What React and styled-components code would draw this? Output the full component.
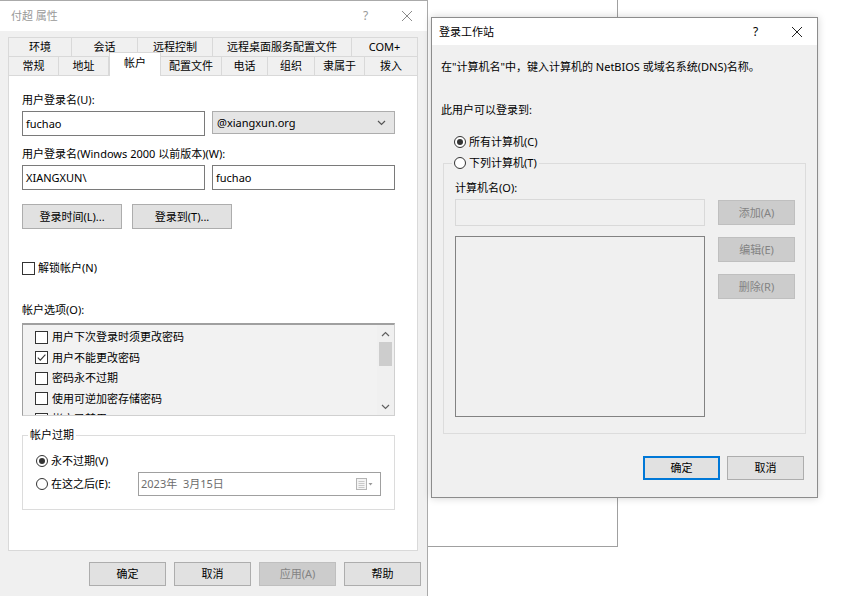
import React from 'react';
import styled, { createGlobalStyle } from 'styled-components';

const GlobalStyle = createGlobalStyle`
  html, body {
    margin: 0;
    padding: 0;
    background: #fff;
  }
  body {
    font-family: "Noto Sans", "Noto Sans CJK SC", sans-serif;
    font-size: 11px;
    color: #000;
  }
  * {
    box-sizing: border-box;
  }
`;

const Desktop = styled.div`
  position: relative;
  width: 848px;
  height: 596px;
  overflow: hidden;
  background: #fff;
`;

const BackWindow = styled.div`
  position: absolute;
  left: 427px;
  top: -1px;
  width: 191px;
  height: 548px;
  background: #fff;
  border: 1px solid #a0a0a0;
`;

const Window = styled.div`
  position: absolute;
  left: ${p => p.$x}px;
  top: ${p => p.$y}px;
  width: ${p => p.$w}px;
  height: ${p => p.$h}px;
  display: flex;
  flex-direction: column;
  background: #f0f0f0;
  border: 1px solid ${p => (p.$active ? '#8c8c8c' : '#aaaaaa')};
  box-shadow: ${p => (p.$active ? '0 0 8px rgba(0,0,0,0.18)' : 'none')};
`;

const TitleBar = styled.div`
  flex: none;
  height: ${p => p.$h}px;
  display: flex;
  align-items: center;
  padding-left: ${p => p.$pl}px;
  background: #fff;
  color: ${p => (p.$active ? '#000' : '#999')};
  line-height: 16px;
`;

const TitleText = styled.div`
  flex: 1;
`;

const TitleButton = styled.div`
  width: 41px;
  height: 100%;
  display: flex;
  align-items: center;
  justify-content: center;
  font-size: 12px;
  color: ${p => p.$color || 'inherit'};
`;

const CloseIcon = ({ color }) => (
  <svg width="12" height="12" viewBox="0 0 12 12">
    <path d="M1 1 L11 11 M11 1 L1 11" stroke={color} strokeWidth="1" fill="none" />
  </svg>
);

/* ---------- tabs ---------- */

const TabArea = styled.div`
  padding: 6px 0 0 8px;
  width: 418px;
`;

const TabRow = styled.div`
  display: flex;
  align-items: flex-end;
  height: 19px;
`;

const Tab = styled.div`
  flex: none;
  width: ${p => p.$w}px;
  height: ${p => (p.$active ? 24 : 19)}px;
  margin-bottom: ${p => (p.$active ? -1 : 0)}px;
  padding-bottom: ${p => (p.$active ? 4 : 0)}px;
  position: relative;
  z-index: ${p => (p.$active ? 2 : 0)};
  display: flex;
  align-items: center;
  justify-content: center;
  background: ${p => (p.$active ? '#fff' : '#f0f0f0')};
  border: 1px solid #d9d9d9;
  border-bottom: none;
  border-left: ${p => (p.$first || p.$active ? '1px solid #d9d9d9' : 'none')};
  line-height: 16px;
  white-space: nowrap;
`;

const Panel = styled.div`
  width: 410px;
  height: 476px;
  background: #fff;
  border: 1px solid #d9d9d9;
  padding: 16px 22px 0 13px;
  display: flex;
  flex-direction: column;
`;

/* ---------- controls ---------- */

const Label = styled.div`
  margin-top: ${p => p.$mt || 0}px;
  line-height: 16px;
  height: 16px;
  white-space: nowrap;
`;

const FieldRow = styled.div`
  margin-top: ${p => p.$mt || 0}px;
  display: grid;
  grid-template-columns: 183px 183px;
  column-gap: 7px;
  align-items: start;
`;

const TextBox = styled.div`
  height: ${p => p.$h || 25}px;
  background: ${p => (p.$disabled ? '#f0f0f0' : '#fff')};
  border: 1px solid ${p => (p.$disabled ? '#d9d9d9' : '#7a7a7a')};
  padding: 0 3px;
  display: flex;
  align-items: center;
  line-height: 16px;
  white-space: nowrap;
`;

const Select = styled.div`
  height: 23px;
  background: #e5e5e5;
  border: 1px solid #adadad;
  padding: 0 8px 0 4px;
  display: flex;
  align-items: center;
  justify-content: space-between;
  line-height: 16px;
`;

const ButtonRow = styled.div`
  margin-top: ${p => p.$mt || 0}px;
  display: flex;
  gap: ${p => p.$gap}px;
  justify-content: ${p => p.$justify || 'flex-start'};
  padding-right: ${p => p.$pr || 0}px;
`;

const Button = styled.div`
  flex: none;
  width: ${p => p.$w || 77}px;
  height: ${p => p.$h || 24}px;
  display: flex;
  align-items: center;
  justify-content: center;
  background: ${p => (p.$disabled ? '#cccccc' : '#e1e1e1')};
  color: ${p => (p.$disabled ? '#838383' : '#000')};
  border: 1px solid ${p => (p.$default ? '#0078d7' : p.$disabled ? '#bfbfbf' : '#adadad')};
  box-shadow: ${p => (p.$default ? 'inset 0 0 0 1px #0078d7' : 'none')};
  line-height: 16px;
  white-space: nowrap;
`;

const CheckRow = styled.div`
  margin-top: ${p => p.$mt || 0}px;
  padding-left: ${p => p.$pl || 0}px;
  height: 16px;
  display: flex;
  align-items: center;
  gap: 3px;
  line-height: 16px;
  white-space: nowrap;
  flex: none;
`;

const CheckBox = styled.div`
  width: 13px;
  height: 13px;
  flex: none;
  background: #fff;
  border: 1px solid #333;
  display: flex;
  align-items: center;
  justify-content: center;
`;

const Check = ({ checked }) => (
  <CheckBox>
    {checked && (
      <svg width="11" height="11" viewBox="0 0 11 11">
        <path d="M1.8 5.6 L4.3 8.1 L9.4 2.6" fill="none" stroke="#333" strokeWidth="1.1" />
      </svg>
    )}
  </CheckBox>
);

const RadioCircle = styled.div`
  width: 12px;
  height: 12px;
  flex: none;
  border-radius: 50%;
  background: #fff;
  border: 1px solid #333;
  display: flex;
  align-items: center;
  justify-content: center;
  &::after {
    content: '';
    display: ${p => (p.$checked ? 'block' : 'none')};
    width: 6px;
    height: 6px;
    border-radius: 50%;
    background: #333;
  }
`;

/* ---------- account options list ---------- */

const ListBox = styled.div`
  margin-top: ${p => p.$mt || 0}px;
  height: ${p => p.$h}px;
  width: ${p => p.$w}px;
  flex: none;
  background: #f2f2f2;
  border: 1px solid #d0d0d0;
  border-top: 2px solid #a0a0a0;
  border-left-color: #a0a0a0;
  display: grid;
  grid-template-columns: 1fr 17px;
  overflow: hidden;
`;

const PlainList = styled.div`
  height: ${p => p.$h}px;
  background: #f0f0f0;
  border: 1px solid #828282;
`;

const ListItems = styled.div`
  padding: 2px 0 0 12px;
  overflow: hidden;
`;

const ListItem = styled.div`
  height: 20.5px;
  display: flex;
  align-items: center;
  gap: 4px;
  line-height: 16px;
  white-space: nowrap;
`;

const ScrollBar = styled.div`
  display: flex;
  flex-direction: column;
  background: #f0f0f0;
`;

const ScrollArrow = styled.div`
  height: 17px;
  flex: none;
  display: flex;
  align-items: center;
  justify-content: center;
`;

const ScrollThumb = styled.div`
  height: 24px;
  margin: 0 2px;
  background: #cdcdcd;
  flex: none;
`;

const ScrollTrack = styled.div`
  flex: 1;
`;

const Chevron = ({ up, color = '#606060' }) => (
  <svg width="9" height="6" viewBox="0 0 9 6">
    <path
      d={up ? 'M1 5 L4.5 1.5 L8 5' : 'M1 1 L4.5 4.5 L8 1'}
      fill="none"
      stroke={color}
      strokeWidth="1.2"
    />
  </svg>
);

/* ---------- group boxes ---------- */

const Group = styled.fieldset`
  margin: ${p => p.$mt || 0}px 0 0 ${p => p.$ml || 0}px;
  width: ${p => p.$w}px;
  min-width: 0;
  border: 1px solid #dcdcdc;
  padding: ${p => p.$pt}px ${p => p.$pr}px ${p => p.$pb}px ${p => p.$pl}px;
  flex: none;
`;

const Legend = styled.legend`
  margin-left: ${p => p.$ml || 0}px;
  padding: 0 2px;
  line-height: 16px;
  height: 16px;
  display: flex;
  align-items: center;
  gap: 3px;
  white-space: nowrap;
`;

const ExpiryRow = styled.div`
  margin-top: ${p => p.$mt || 0}px;
  display: grid;
  grid-template-columns: 102px 1fr;
  align-items: center;
`;

const DatePicker = styled.div`
  height: 24px;
  background: #fff;
  border: 1px solid #a0a0a0;
  padding: 0 6px 0 2px;
  display: flex;
  align-items: center;
  justify-content: space-between;
  color: #6d6d6d;
  line-height: 16px;
  white-space: pre;
`;

const CalendarIcon = () => (
  <svg width="18" height="12" viewBox="0 0 18 12">
    <rect x="0.5" y="0.5" width="10" height="11" fill="#f4f4f4" stroke="#b5b5b5" />
    <path d="M2.5 3.5 H8.5 M2.5 5.5 H8.5 M2.5 7.5 H8.5 M2.5 9.5 H8.5" stroke="#c8c8c8" />
    <path d="M12.5 5 L16.5 5 L14.5 7.5 Z" fill="#9a9a9a" />
  </svg>
);

/* ---------- logon workstations dialog ---------- */

const DialogBody = styled.div`
  flex: 1;
  display: flex;
  flex-direction: column;
  padding: 14px 0 0 0;
`;

const Para = styled.div`
  margin-top: ${p => p.$mt || 0}px;
  padding-left: ${p => p.$pl || 0}px;
  line-height: 16px;
  height: 16px;
  white-space: nowrap;
`;

const WorkGrid = styled.div`
  margin-top: 3px;
  display: grid;
  grid-template-columns: 250px 77px;
  column-gap: 13px;
  align-items: start;
`;

const Stack = styled.div`
  display: flex;
  flex-direction: column;
  gap: ${p => p.$gap}px;
  padding-top: ${p => p.$pt || 0}px;
`;

const tabsBack = [
  ['环境', 64],
  ['会话', 66],
  ['远程控制', 75],
  ['远程桌面服务配置文件', 139],
  ['COM+', 66],
];

const tabsFront = [
  ['常规', 51],
  ['地址', 50],
  ['帐户', 52, true],
  ['配置文件', 61],
  ['电话', 46],
  ['组织', 47],
  ['隶属于', 50],
  ['拨入', 53],
];

const options = [
  ['用户下次登录时须更改密码', false],
  ['用户不能更改密码', true],
  ['密码永不过期', false],
  ['使用可逆加密存储密码', false],
  ['帐户已禁用', false],
];

export default function App() {
  return (
    <Desktop>
      <GlobalStyle />

      <BackWindow />

      {/* 属性对话框 */}
      <Window $x={-1} $y={0} $w={429} $h={600}>
        <TitleBar $h={30} $pl={11}>
          <TitleText>付超 属性</TitleText>
          <TitleButton $color="#999">?</TitleButton>
          <TitleButton>
            <CloseIcon color="#8a8a8a" />
          </TitleButton>
        </TitleBar>

        <TabArea>
          <TabRow>
            {tabsBack.map(([name, w], i) => (
              <Tab key={name} $w={w} $first={i === 0}>
                {name}
              </Tab>
            ))}
          </TabRow>
          <TabRow>
            {tabsFront.map(([name, w, active], i) => (
              <Tab key={name} $w={w} $first={i === 0} $active={active}>
                {name}
              </Tab>
            ))}
          </TabRow>

          <Panel>
            <Label>用户登录名(U):</Label>
            <FieldRow $mt={3}>
              <TextBox>fuchao</TextBox>
              <Select>
                <span>@xiangxun.org</span>
                <Chevron color="#555" />
              </Select>
            </FieldRow>

            <Label $mt={10}>用户登录名(Windows 2000 以前版本)(W):</Label>
            <FieldRow $mt={3}>
              <TextBox>XIANGXUN\</TextBox>
              <TextBox>fuchao</TextBox>
            </FieldRow>

            <ButtonRow $mt={14} $gap={10}>
              <Button $w={100} $h={25}>登录时间(L)...</Button>
              <Button $w={100} $h={25}>登录到(T)...</Button>
            </ButtonRow>

            <CheckRow $mt={31}>
              <Check />
              解锁帐户(N)
            </CheckRow>

            <Label $mt={26}>帐户选项(O):</Label>
            <ListBox $mt={5} $h={93} $w={373}>
              <ListItems>
                {options.map(([text, checked]) => (
                  <ListItem key={text}>
                    <Check checked={checked} />
                    {text}
                  </ListItem>
                ))}
              </ListItems>
              <ScrollBar>
                <ScrollArrow>
                  <Chevron up />
                </ScrollArrow>
                <ScrollThumb />
                <ScrollTrack />
                <ScrollArrow>
                  <Chevron />
                </ScrollArrow>
              </ScrollBar>
            </ListBox>

            <Group $mt={11} $w={373} $pt={10} $pr={13} $pb={13} $pl={13}>
              <Legend $ml={-8}>帐户过期</Legend>
              <CheckRow>
                <RadioCircle $checked />
                永不过期(V)
              </CheckRow>
              <ExpiryRow $mt={3}>
                <CheckRow>
                  <RadioCircle />
                  在这之后(E):
                </CheckRow>
                <DatePicker>
                  <span>2023年  3月15日</span>
                  <CalendarIcon />
                </DatePicker>
              </ExpiryRow>
            </Group>
          </Panel>
        </TabArea>

        <ButtonRow $mt={11} $gap={8} $justify="flex-end" $pr={6}>
          <Button>确定</Button>
          <Button>取消</Button>
          <Button $disabled>应用(A)</Button>
          <Button>帮助</Button>
        </ButtonRow>
      </Window>

      {/* 登录工作站 */}
      <Window $x={431} $y={17} $w={387} $h={481} $active>
        <TitleBar $h={27} $pl={7} $active>
          <TitleText>登录工作站</TitleText>
          <TitleButton>?</TitleButton>
          <TitleButton>
            <CloseIcon color="#222" />
          </TitleButton>
        </TitleBar>

        <DialogBody>
          <Para $pl={9}>在"计算机名"中，键入计算机的 NetBIOS 或域名系统(DNS)名称。</Para>
          <Para $pl={9} $mt={27}>此用户可以登录到:</Para>
          <CheckRow $mt={16} $pl={22}>
            <RadioCircle $checked />
            所有计算机(C)
          </CheckRow>

          <Group $mt={5} $ml={11} $w={363} $pt={9} $pr={9} $pb={16} $pl={11}>
            <Legend $ml={-3}>
              <RadioCircle />
              下列计算机(T)
            </Legend>
            <Label>计算机名(O):</Label>
            <WorkGrid>
              <Stack $gap={10}>
                <TextBox $disabled $h={27} />
                <PlainList $h={181} />
              </Stack>
              <Stack $gap={12} $pt={1}>
                <Button $disabled $h={25}>添加(A)</Button>
                <Button $disabled $h={25}>编辑(E)</Button>
                <Button $disabled $h={25}>删除(R)</Button>
              </Stack>
            </WorkGrid>
          </Group>

          <ButtonRow $mt={22} $gap={7} $justify="flex-end" $pr={13}>
            <Button $default>确定</Button>
            <Button>取消</Button>
          </ButtonRow>
        </DialogBody>
      </Window>
    </Desktop>
  );
}
